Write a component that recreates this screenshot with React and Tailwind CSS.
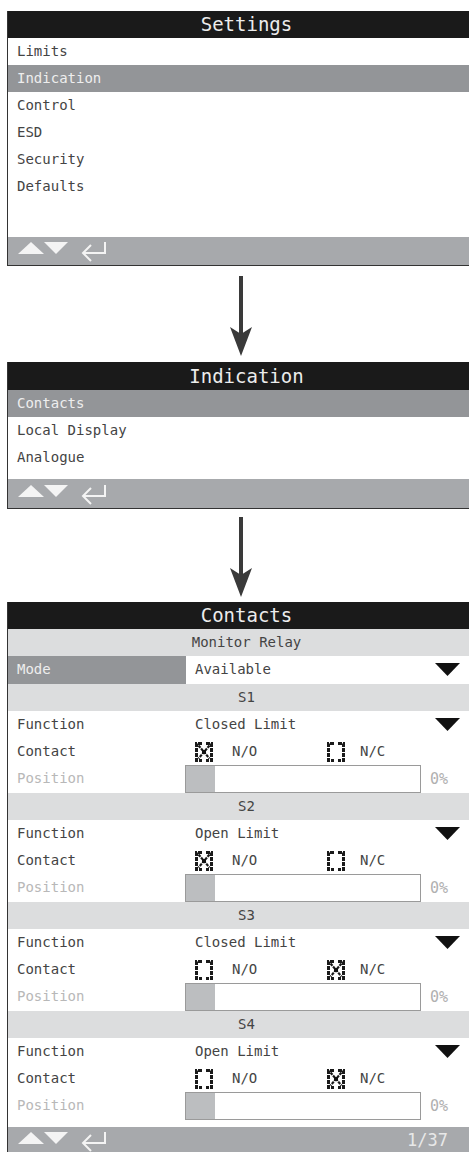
import React from "react";

const mono = "font-['DejaVu_Sans_Mono',monospace]";

const DownArrow = () => (
    <svg width="24" height="80" viewBox="0 0 24 80">
        <rect x="10" y="0" width="4" height="58" fill="#3a3a3a" />
        <path d="M1 51 L12 58 L23 51 L12 80 Z" fill="#3a3a3a" />
    </svg>
);

const Caret = () => (
    <svg width="25" height="13" viewBox="0 0 25 13">
        <path d="M0 0 H25 L12.5 13 Z" fill="#111" />
    </svg>
);

const NavIcons = () => (
    <svg width="92" height="24" viewBox="0 0 92 24">
        <path d="M0 15 L13 3 L26 15 Z" fill="#f4f4f4" />
        <path d="M26 3 H50 L38 15 Z" fill="#f4f4f4" />
        <path d="M87 3 V14 H65" stroke="#f4f4f4" strokeWidth="2" fill="none" />
        <path d="M73 6 L65 14 L73 22" stroke="#f4f4f4" strokeWidth="2" fill="none" />
    </svg>
);

// dotted lcd style checkbox
const Check = ({ on }) => (
    <svg width="18" height="20" viewBox="0 0 18 20">
        <path d="M7 1.5 H1.5 V18.5 H7" stroke="#1a1a1a" strokeWidth="3" fill="none" strokeDasharray="4 1" />
        <path d="M11 1.5 H16.5 V18.5 H11" stroke="#1a1a1a" strokeWidth="3" fill="none" strokeDasharray="4 1" />
        {on && (
            <>
                <path d="M3.5 3.5 L14.5 16.5 M14.5 3.5 L3.5 16.5" stroke="#1a1a1a" strokeWidth="2.2" strokeDasharray="3 1" />
                <rect x="7" y="8" width="4" height="4" fill="#111" />
            </>
        )}
    </svg>
);

const Footer = ({ page, h = "h-[28px]" }) => (
    <div className={`${h} bg-[#a7a9ac] flex items-center pl-[10px] pr-[37px]`}>
        <NavIcons />
        {page && <span className="ml-auto text-[17px] text-[#e8e8e8]">{page}</span>}
    </div>
);

const Header = ({ title, h }) => (
    <div className={`${h} bg-[#1a1a1a] text-[#ececec] text-[19px] flex items-center justify-center`}>
        {title}
    </div>
);

const MenuRow = ({ label, active }) => (
    <div
        className={`h-[27px] flex items-center pl-[9px] ${
            active ? "bg-[#939598] text-[#eeeeee]" : "text-[#444]"
        }`}
    >
        {label}
    </div>
);

const rowH = "h-[27.25px]";

const Band = ({ label }) => (
    <div className={`${rowH} bg-[#dcddde] text-[#444] flex items-center justify-center`}>{label}</div>
);

const Section = ({ name, fn, no }) => (
    <>
        <Band label={name} />
        <div className={`${rowH} flex items-center text-[#444]`}>
            <div className="w-[178px] pl-[9px] shrink-0">Function</div>
            <div className="pl-[9px]">{fn}</div>
            <div className="ml-auto mr-[25px]">
                <Caret />
            </div>
        </div>
        <div className={`${rowH} flex items-center text-[#444]`}>
            <div className="w-[178px] pl-[9px] shrink-0">Contact</div>
            <div className="pl-[9px] flex items-center w-[141px]">
                <Check on={no} />
                <span className="ml-[19px]">N/O</span>
            </div>
            <div className="flex items-center">
                <Check on={!no} />
                <span className="ml-[15px]">N/C</span>
            </div>
        </div>
        <div className={`${rowH} flex items-center`}>
            <div className="w-[177px] pl-[9px] shrink-0 text-[#b8b8b8]">Position</div>
            <div className="w-[236px] h-full border border-[#9a9a9a] bg-white flex">
                <div className="w-[29px] h-full bg-[#bcbec0]" />
            </div>
            <div className="ml-[9px] text-[#b0b0b0] text-[15px]">0%</div>
        </div>
    </>
);

const sections = [
    { name: "S1", fn: "Closed Limit", no: true },
    { name: "S2", fn: "Open Limit", no: true },
    { name: "S3", fn: "Closed Limit", no: false },
    { name: "S4", fn: "Open Limit", no: false },
];

export default function App() {
    return (
        <div className={`w-[469px] h-[1152px] overflow-hidden bg-white text-[14px] ${mono}`}>
            <div className="pt-[11px] pl-[7px]">
                {/* Settings */}
                <div className="w-[478px] border-l border-b border-[#333]">
                    <Header title="Settings" h="h-[27px]" />
                    {["Limits", "Indication", "Control", "ESD", "Security", "Defaults"].map((l) => (
                        <MenuRow key={l} label={l} active={l === "Indication"} />
                    ))}
                    <div className="h-[37px]" />
                    <Footer h="h-[28px]" />
                </div>

                <div className="h-[96px] pl-[222px] pt-[10px]">
                    <DownArrow />
                </div>

                {/* Indication */}
                <div className="w-[478px] border-l border-b border-[#333]">
                    <Header title="Indication" h="h-[28px]" />
                    {["Contacts", "Local Display", "Analogue"].map((l) => (
                        <MenuRow key={l} label={l} active={l === "Contacts"} />
                    ))}
                    <div className="h-[8px]" />
                    <Footer h="h-[29px]" />
                </div>

                <div className="h-[93px] pl-[222px] pt-[8px]">
                    <DownArrow />
                </div>

                {/* Contacts */}
                <div className="w-[478px] border-l border-[#333]">
                    <Header title="Contacts" h="h-[27px]" />
                    <Band label="Monitor Relay" />
                    <div className={`${rowH} flex items-center`}>
                        <div className="w-[178px] h-full pl-[9px] shrink-0 bg-[#939598] text-[#eeeeee] flex items-center">
                            Mode
                        </div>
                        <div className="pl-[9px] text-[#444]">Available</div>
                        <div className="ml-auto mr-[25px]">
                            <Caret />
                        </div>
                    </div>
                    {sections.map((s) => (
                        <Section key={s.name} {...s} />
                    ))}
                    <div className="h-[7.5px]" />
                    <Footer page="1/37" h="h-[28px]" />
                </div>
            </div>
        </div>
    );
}
